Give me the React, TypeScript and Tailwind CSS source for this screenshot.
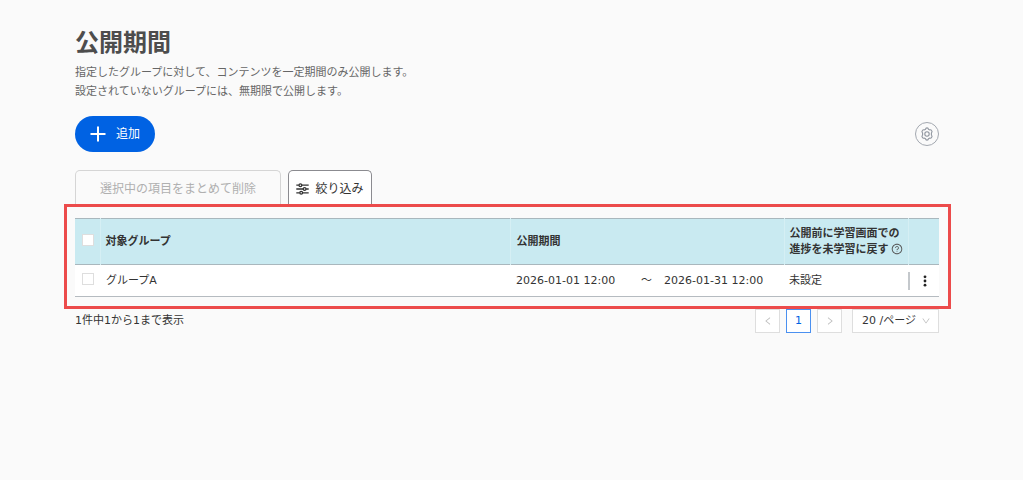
import React, { useState } from "react";
import clsx from "clsx";
import { AiOutlineDown, AiOutlineLeft, AiOutlineQuestionCircle, AiOutlineRight } from "react-icons/ai";

type PublishPeriod = {
  id: string;
  group: string;
  start: string;
  end: string;
  reset: string;
};

const periods: PublishPeriod[] = [
  {
    id: "group-a",
    group: "グループA",
    start: "2026-01-01 12:00",
    end: "2026-01-31 12:00",
    reset: "未設定",
  },
];

const PlusIcon = () => (
  <svg viewBox="0 0 16 16" className="size-4" fill="none" stroke="currentColor" strokeWidth="2" aria-hidden="true">
    <path d="M8 0.5v15M0.5 8h15" />
  </svg>
);

const FilterIcon = () => (
  <svg viewBox="0 0 13 12" className="h-3 w-[13px]" fill="none" stroke="currentColor" strokeWidth="1.3" aria-hidden="true">
    <path d="M0.3 2.2h2.6M5.9 2.2h6.8M0.3 6h6.8M10.1 6h2.6M0.3 9.8h3.4M6.7 9.8h6" />
    <circle cx="4.4" cy="2.2" r="1.4" />
    <circle cx="8.6" cy="6" r="1.4" />
    <circle cx="5.2" cy="9.8" r="1.4" />
  </svg>
);

// Six-lobed gear
const GearIcon = () => (
  <svg viewBox="0 0 14 14" className="size-3.5" fill="none" stroke="currentColor" strokeWidth="1.1" strokeLinejoin="round" aria-hidden="true">
    <path d="M5.5 2.3Q5.7 0.9 7 0.9T8.5 2.3L9.5 2.9Q10.9 2.4 11.6 3.5Q12.6 4.8 11.5 5.8L11.3 7L11.5 8.2Q12.6 9.2 11.6 10.5Q10.9 11.6 9.5 11.1L8.5 11.7Q8.3 13.1 7 13.1T5.5 11.7L4.5 11.1Q3.1 11.6 2.4 10.5Q1.4 9.2 2.5 8.2L2.7 7L2.5 5.8Q1.4 4.8 2.4 3.5Q3.1 2.4 4.5 2.9Z" />
    <circle cx="7" cy="7" r="2.2" />
  </svg>
);

const MoreIcon = () => (
  <svg viewBox="0 0 4 12" className="h-3 w-1" fill="currentColor" aria-hidden="true">
    <circle cx="2" cy="1.8" r="1.4" />
    <circle cx="2" cy="6" r="1.4" />
    <circle cx="2" cy="10.2" r="1.4" />
  </svg>
);

type CheckboxProps = {
  label: string;
  checked: boolean;
  onChange: () => void;
};

const Checkbox: React.FC<CheckboxProps> = ({ label, checked, onChange }) => (
  <input
    type="checkbox"
    aria-label={label}
    checked={checked}
    onChange={onChange}
    className="block size-3 appearance-none border border-[#dedede] bg-white checked:bg-[#0062e3]"
  />
);

type PeriodTableProps = {
  selected: string[];
  onToggle: (id: string) => void;
  onToggleAll: () => void;
};

const PeriodTable: React.FC<PeriodTableProps> = ({ selected, onToggle, onToggleAll }) => (
  <table className="w-full table-fixed border-collapse text-left">
    <colgroup>
      <col className="w-[25px]" />
      <col />
      <col className="w-[274px]" />
      <col className="w-[124px]" />
      <col className="w-[31px]" />
    </colgroup>
    <thead>
      <tr className="h-[46px] border-y border-[#a9b7bd] bg-[#c9eaf1]">
        <th className="border-r border-[#d5eff4] pb-1 pl-[7px]">
          <Checkbox label="すべて選択" checked={selected.length === periods.length} onChange={onToggleAll} />
        </th>
        <th className="border-r border-[#d5eff4] pl-[5px]">対象グループ</th>
        <th className="border-r border-[#d5eff4] pl-1.5">公開期間</th>
        <th className="border-r border-[#d5eff4] pl-[5px] leading-4 whitespace-nowrap">
          公開前に学習画面での
          <br />
          進捗を未学習に戻す
          <AiOutlineQuestionCircle className="ml-0.5 inline size-3 align-[-2px] text-[#555]" />
        </th>
        <th />
      </tr>
    </thead>
    <tbody>
      {periods.map((p) => (
        <tr key={p.id} className="h-8 border-b border-[#b5bbc0] bg-white">
          <td className="pb-1 pl-[7px]">
            <Checkbox label={p.group} checked={selected.includes(p.id)} onChange={() => onToggle(p.id)} />
          </td>
          <td className="pl-1.5">{p.group}</td>
          <td className="pl-1.5">
            <div className="flex items-center whitespace-nowrap">
              <span className="w-[125px]">{p.start}</span>
              <span className="w-[23px]">～</span>
              <span>{p.end}</span>
            </div>
          </td>
          <td className="pl-[5px]">{p.reset}</td>
          <td>
            <button type="button" aria-label="メニュー" className="flex h-[18px] w-full items-center justify-center border-l-2 border-[#c4c8cc] text-[#222]">
              <MoreIcon />
            </button>
          </td>
        </tr>
      ))}
    </tbody>
  </table>
);

const pageButton = "flex h-6 w-[25px] items-center justify-center border bg-white";

const Pagination = () => (
  <nav aria-label="ページ" className="flex items-center gap-1.5">
    <button type="button" aria-label="前へ" className={clsx(pageButton, "border-[#dedede] text-[#bbb]")}>
      <AiOutlineLeft className="size-2.5" />
    </button>
    <button type="button" aria-current="page" className={clsx(pageButton, "border-[#4a90f0] text-[#0062e3]")}>
      1
    </button>
    <button type="button" aria-label="次へ" className={clsx(pageButton, "border-[#dedede] text-[#bbb]")}>
      <AiOutlineRight className="size-2.5" />
    </button>
    <div className="ml-1 grid w-[87px] items-center">
      <select
        aria-label="表示件数"
        defaultValue="20"
        className="col-start-1 row-start-1 h-6 w-full appearance-none border border-[#dedede] bg-white pl-[9px]"
      >
        <option value="20">20 /ページ</option>
        <option value="50">50 /ページ</option>
        <option value="100">100 /ページ</option>
      </select>
      <AiOutlineDown className="pointer-events-none col-start-1 row-start-1 mr-2 size-2.5 justify-self-end text-[#bbb]" />
    </div>
  </nav>
);

const App = () => {
  const [selected, setSelected] = useState<string[]>([]);

  const toggle = (id: string) => {
    setSelected((prev) => (prev.includes(id) ? prev.filter((x) => x !== id) : [...prev, id]));
  };

  const toggleAll = () => {
    setSelected((prev) => (prev.length === periods.length ? [] : periods.map((p) => p.id)));
  };

  return (
    <main className="min-h-screen bg-[#fafafa] pt-[25px] pr-[84px] pl-[75px] font-['DejaVu_Sans','Noto_Sans_CJK_JP',sans-serif] text-[11px] leading-4 text-[#333]">
      <h1 className="text-[24px] leading-9 font-bold text-[#4d4d4d]">公開期間</h1>
      <p className="mt-0.5 leading-[19px] text-[#666]">
        指定したグループに対して、コンテンツを一定期間のみ公開します。
        <br />
        設定されていないグループには、無期限で公開します。
      </p>

      <div className="mt-[15px] flex items-center justify-between">
        <button type="button" className="flex h-9 w-20 items-center justify-center gap-2.5 rounded-full bg-[#0062e3] text-[12px] text-white">
          <PlusIcon />
          追加
        </button>
        <button type="button" aria-label="設定" className="flex size-6 items-center justify-center rounded-full border border-[#a3a8b0] text-[#8e949e]">
          <GearIcon />
        </button>
      </div>

      <div className="mt-[18px] flex gap-[7px] text-[12px]">
        <button
          type="button"
          disabled={!selected.length}
          className="h-9 w-[206px] rounded-t-[5px] border border-b-0 border-[#d5d5d5] disabled:text-[#b0b0b0]"
        >
          選択中の項目をまとめて削除
        </button>
        <button type="button" className="flex h-9 w-[84px] items-center justify-center gap-1.5 rounded-t-[5px] border border-b-0 border-[#8b8b90] bg-white">
          <FilterIcon />
          絞り込み
        </button>
      </div>

      <section className="relative mt-3">
        <PeriodTable selected={selected} onToggle={toggle} onToggleAll={toggleAll} />
        <div className="pointer-events-none absolute -top-3.5 -right-3 -bottom-3 -left-[11px] border-3 border-[#ec4b4b]" />
      </section>

      <div className="mt-3 flex items-center justify-between">
        <p>1件中1から1まで表示</p>
        <Pagination />
      </div>
    </main>
  );
};

export default App;
